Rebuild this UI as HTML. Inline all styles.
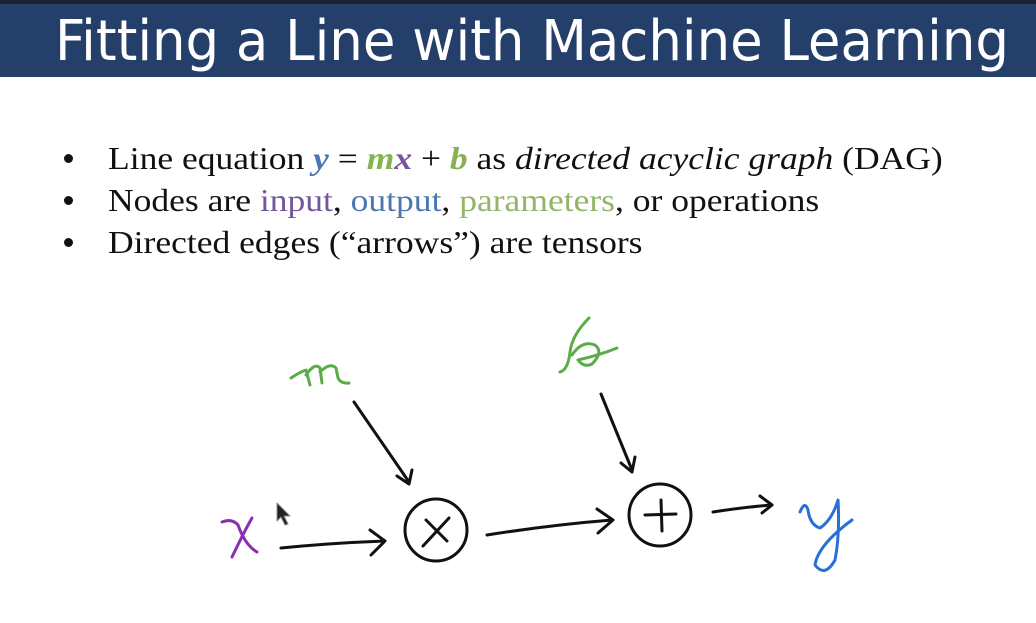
<!DOCTYPE html>
<html><head><style>
body{margin:0;width:1036px;height:623px;background:#fff;overflow:hidden;position:relative;font-family:"Liberation Serif",serif}
.top{position:absolute;left:0;top:0;width:1036px;height:4px;background:#1c2230}
.band{position:absolute;left:0;top:4px;width:1036px;height:73px;background:#253f6b}
.title{position:absolute;left:55px;top:9px;color:#fff;font-family:"DejaVu Sans Condensed","Liberation Sans Narrow","Liberation Sans",sans-serif;font-size:56px;line-height:66px;white-space:nowrap;transform:scaleX(1.05);transform-origin:left}
ul{position:absolute;left:60px;top:137px;margin:0;padding:0;list-style:none;font-size:32px;color:#111}
li{height:42px;line-height:42px;position:relative;padding-left:48px;white-space:nowrap}
li span.t{display:inline-block;transform:scaleX(1.11);transform-origin:left}
li:before{content:"";position:absolute;left:4px;top:17px;width:9px;height:9px;border-radius:50%;background:#111}
.p{color:#74569a}.b{color:#4a77b0}.g{color:#93b56a}
</style></head><body>
<div class="top"></div><div class="band"></div>
<div class="title">Fitting a Line with Machine Learning</div>
<ul>
<li><span class="t">Line equation <b><i style="color:#4a77b0">y</i></b> = <b><i style="color:#86b24f">m</i><i style="color:#74569a">x</i></b> + <b><i style="color:#86b24f">b</i></b> as <i>directed acyclic graph</i> (DAG)</span></li>
<li><span class="t">Nodes are <span class="p">input</span>, <span class="b">output</span>, <span class="g">parameters</span>, or operations</span></li>
<li><span class="t">Directed edges (“arrows”) are tensors</span></li>
</ul>
<svg width="1036" height="623" style="position:absolute;left:0;top:0" fill="none" stroke-linecap="round" stroke-linejoin="round">
<g stroke="#111" stroke-width="3">
<path d="M281 548 Q330 543 384 541"/><path d="M370 530 L385 541 L371 555"/>
<circle cx="436" cy="530" r="31"/><path d="M426 520 L447 541 M449 518 L423 546"/>
<path d="M487 535 Q550 525 612 520"/><path d="M597 509 L613 520 L598 533"/>
<circle cx="660" cy="515" r="31"/><path d="M645 515 L676 514 M661 500 L662 531"/>
<path d="M713 512 Q745 507 772 505"/><path d="M760 496 L772 505 L762 513"/>
<path d="M354 402 L409 482"/><path d="M397 476 L409 484 L412 470"/>
<path d="M601 394 L632 470"/><path d="M621 463 L632 472 L635 457"/>
</g>
<path d="M277 503 L277 521 L281 517 L285 525 L288 524 L284 516 L290 516 Z" fill="#222" stroke="#888" stroke-width="1"/>
<path d="M222 522 Q232 518 238 525 Q245 545 257 552 M252 518 Q245 530 232 557" stroke="#8a2fb0" stroke-width="3"/>
<path d="M291 378 Q300 372 306 370 L310 385 M306 375 Q315 362 320 368 L322 383 M320 372 Q330 362 336 368 L338 378 Q341 384 349 383" stroke="#5aac48" stroke-width="3"/>
<path d="M589 318 Q572 335 570 352 Q568 370 560 372 M572 355 Q582 340 595 345 Q604 352 592 364 Q584 368 578 360 Q600 355 617 348" stroke="#5aac48" stroke-width="3"/>
<path d="M800 512 Q805 500 808 510 Q810 525 820 528 Q832 520 838 500 Q840 535 835 560 Q825 578 815 565 Q818 545 852 520" stroke="#2a6ed8" stroke-width="3"/>
</svg>
</body></html>
